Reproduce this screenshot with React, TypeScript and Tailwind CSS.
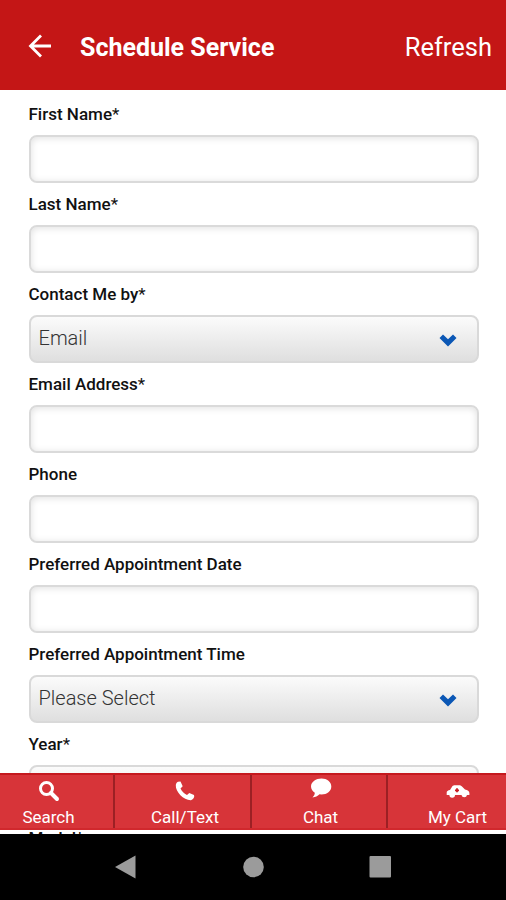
import type { ReactNode } from 'react'

type Field = {
  label: string
  required?: boolean
  value?: string
}

const FIELDS: Field[] = [
  { label: 'First Name', required: true },
  { label: 'Last Name', required: true },
  { label: 'Contact Me by', required: true, value: 'Email' },
  { label: 'Email Address', required: true },
  { label: 'Phone' },
  { label: 'Preferred Appointment Date' },
  { label: 'Preferred Appointment Time', value: 'Please Select' },
  { label: 'Year', required: true, value: ' ' },
]

function Chevron() {
  return (
    <svg width="18" height="13" viewBox="0 0 18 13" className="mt-[3px]">
      <path d="M0.5 4 L4 0.5 L9 5.2 L14 0.5 L17.5 4 L9 12.5 Z" fill="#0b57b5" />
    </svg>
  )
}

function FormField({ label, required, value }: Field) {
  return (
    <div className="shrink-0">
      <label className="flex h-[42px] items-center pt-px text-[17px] font-medium text-[#111]">
        {label}
        {required && <span className="font-normal">*</span>}
      </label>
      {value ? (
        <div className="flex h-12 w-[450px] items-center justify-between rounded-[8px] border-2 border-[#d9d9d9] bg-linear-to-b from-[#fbfbfb] to-[#dfdfdf] pr-5 pl-2 text-[20px] font-light text-[#333]">
          <span className="-mt-0.5">{value}</span>
          <Chevron />
        </div>
      ) : (
        <div className="h-12 w-[450px] rounded-[8px] border-2 border-[#dadada] bg-white shadow-[inset_0_1px_7px_rgba(0,0,0,0.13)]" />
      )}
    </div>
  )
}

function Tab({ label, width, children }: { label: string; width: string; children: ReactNode }) {
  return (
    <button className={'flex shrink-0 flex-col items-center ' + width}>
      <span className="flex h-[32px] items-center">{children}</span>
      <span className="h-[20px] text-[17px] leading-[20px] whitespace-nowrap">{label}</span>
    </button>
  )
}

export default function App() {
  return (
    <div className="flex h-[900px] w-[506px] flex-col overflow-hidden bg-white font-['Roboto',sans-serif]">
      <header className="flex h-[90px] shrink-0 items-center bg-[#c41616] pt-[5px] pr-[14px] pl-[28px] text-white">
        <svg width="24" height="24" viewBox="0 0 24 24" fill="none" stroke="currentColor" strokeWidth="2.8" className="mb-[4px]">
          <path d="M23 12 H2.5 M13 1.5 L2.5 12 L13 22.5" />
        </svg>
        <h1 className="ml-[28px] text-[25px] font-bold">Schedule Service</h1>
        <button className="ml-auto text-[25.5px]">Refresh</button>
      </header>

      <main className="h-[683px] shrink-0 overflow-hidden pt-[3px] pl-[28.5px]">
        {FIELDS.map(f => (
          <FormField key={f.label} {...f} />
        ))}
      </main>

      <nav className="flex h-[57px] shrink-0 overflow-hidden border-y-2 border-t-[#c5191e] border-b-[#d0282d] bg-[#d73439] text-white">
        <Tab label="Search" width="w-[115px] border-r-2 border-[#9c2024] pr-[16px]">
          <svg width="22" height="22" viewBox="0 0 22 22" fill="none" stroke="currentColor">
            <circle cx="8.5" cy="8.5" r="6" strokeWidth="3" />
            <path d="M13 13 L19 19" strokeWidth="4" strokeLinecap="round" />
          </svg>
        </Tab>
        <Tab label="Call/Text" width="w-[137px] border-r-2 border-[#9c2024] pl-[5px]">
          <svg width="20" height="20" viewBox="0 0 20 20" fill="currentColor">
            <path d="M3 0.8 L5.5 0.6 L7.7 5.3 L5.5 7.6 C6.8 10.5 9 12.7 12 14 L14.3 11.9 L19 14 C19.8 16 18.5 18.3 16 19.2 C9 19.5 0.3 11 0.8 4 C1 2.5 1.8 1.2 3 0.8 Z" />
          </svg>
        </Tab>
        <Tab label="Chat" width="w-[136px] border-r-2 border-[#9c2024] pl-[3px]">
          <svg width="22" height="20" viewBox="0 0 22 20" fill="currentColor" className="mb-[6px]">
            <path d="M11.5 0.5 C17 0.5 21.3 4 21.3 8.5 C21.3 13 17 16.5 11.5 16.5 L9.5 16.3 C7.5 18 5.5 19.2 2.5 19.5 C4 18 4.8 16.5 4.8 14.8 C2.5 13.4 1 11 1 8.5 C1 4 6 0.5 11.5 0.5 Z" />
          </svg>
        </Tab>
        <Tab label="My Cart" width="w-[139px]">
          <svg width="24" height="13" viewBox="0 0 24 13">
            <path d="M6.5 1 C7 0.5 8 0.3 9 0.3 H13 C14.5 0.3 15.5 0.8 16.5 2 L19 4.5 C21.5 5 23.4 6 23.4 8 V10 H21 A2.8 2.8 0 0 1 15.5 10 H9 A2.8 2.8 0 0 1 3.4 10 H0.7 V7.5 C0.7 6 2 5.3 4 4.9 Z" fill="currentColor" />
            <path d="M11 3.3 V7.3 M9 5.3 H13" stroke="#c91c22" strokeWidth="1.8" />
          </svg>
        </Tab>
      </nav>

      {/* sliver of the scrolled form showing under the tab bar */}
      <div className="h-1 shrink-0 overflow-hidden pl-[28.5px]">
        <div className="-mt-[2px] text-[17px] leading-[20px] font-medium text-[#111]">Model*</div>
      </div>

      <footer className="flex h-[66px] shrink-0 items-center justify-center bg-black">
        <svg width="276" height="24" viewBox="0 0 276 24" fill="#9b9b9b">
          <path d="M0 12 L20.5 0.5 V23.5 Z" />
          <circle cx="138.5" cy="12" r="10.3" />
          <rect x="254.5" y="1" width="21.5" height="21.5" rx="1" />
        </svg>
      </footer>
    </div>
  )
}
